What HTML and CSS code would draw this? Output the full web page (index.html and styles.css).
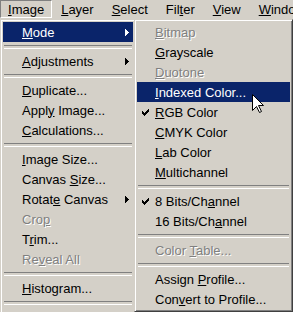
FILE: index.html
```html
<html>

<head>
  <title>Image menu</title>
  <link rel="stylesheet" href="styles.css">
</head>

<body>
  <div class="menubar">
    <span class="bar-item open"><u>I</u>mage</span>
    <span class="bar-item"><u>L</u>ayer</span>
    <span class="bar-item"><u>S</u>elect</span>
    <span class="bar-item">Fil<u>t</u>er</span>
    <span class="bar-item"><u>V</u>iew</span>
    <span class="bar-item"><u>W</u>indow</span>
  </div>

  <div class="menus">
    <ul class="menu main">
      <li class="item active"><span class="mark"></span><span><u>M</u>ode</span><svg class="arrow" width="4" height="7"><rect x="0" y="0" width="1" height="7"/><rect x="1" y="1" width="1" height="5"/><rect x="2" y="2" width="1" height="3"/><rect x="3" y="3" width="1" height="1"/></svg></li>
      <li class="sep"></li>
      <li class="item"><span class="mark"></span><span><u>A</u>djustments</span><svg class="arrow" width="4" height="7"><rect x="0" y="0" width="1" height="7"/><rect x="1" y="1" width="1" height="5"/><rect x="2" y="2" width="1" height="3"/><rect x="3" y="3" width="1" height="1"/></svg></li>
      <li class="sep"></li>
      <li class="item"><span class="mark"></span><span><u>D</u>uplicate...</span></li>
      <li class="item"><span class="mark"></span><span>Appl<u>y</u> Image...</span></li>
      <li class="item"><span class="mark"></span><span><u>C</u>alculations...</span></li>
      <li class="sep"></li>
      <li class="item"><span class="mark"></span><span><u>I</u>mage Size...</span></li>
      <li class="item"><span class="mark"></span><span>Canvas <u>S</u>ize...</span></li>
      <li class="item"><span class="mark"></span><span>Rotat<u>e</u> Canvas</span><svg class="arrow" width="4" height="7"><rect x="0" y="0" width="1" height="7"/><rect x="1" y="1" width="1" height="5"/><rect x="2" y="2" width="1" height="3"/><rect x="3" y="3" width="1" height="1"/></svg></li>
      <li class="item disabled"><span class="mark"></span><span>Cro<u>p</u></span></li>
      <li class="item"><span class="mark"></span><span>T<u>r</u>im...</span></li>
      <li class="item disabled"><span class="mark"></span><span>Re<u>v</u>eal All</span></li>
      <li class="sep"></li>
      <li class="item"><span class="mark"></span><span><u>H</u>istogram...</span></li>
      <li class="sep"></li>
      <li class="item"><span class="mark"></span><span>Trap...</span></li>
    </ul>

    <ul class="menu sub">
      <li class="item disabled"><span class="mark"></span><span><u>B</u>itmap</span></li>
      <li class="item"><span class="mark"></span><span><u>G</u>rayscale</span></li>
      <li class="item disabled"><span class="mark"></span><span><u>D</u>uotone</span></li>
      <li class="item active"><span class="mark"></span><span><u>I</u>ndexed Color...</span></li>
      <li class="item"><span class="mark"><svg class="check" width="7" height="7"><path d="M0 2h1v1h1v1h1v-1h1v-1h1v-1h1v-1h1v3h-1v1h-1v1h-1v1h-1v1h-1v-1h-1v-1h-1z"/></svg></span><span><u>R</u>GB Color</span></li>
      <li class="item"><span class="mark"></span><span><u>C</u>MYK Color</span></li>
      <li class="item"><span class="mark"></span><span><u>L</u>ab Color</span></li>
      <li class="item"><span class="mark"></span><span><u>M</u>ultichannel</span></li>
      <li class="sep"></li>
      <li class="item"><span class="mark"><svg class="check" width="7" height="7"><path d="M0 2h1v1h1v1h1v-1h1v-1h1v-1h1v-1h1v3h-1v1h-1v1h-1v1h-1v1h-1v-1h-1v-1h-1z"/></svg></span><span>8 Bits/Ch<u>a</u>nnel</span></li>
      <li class="item"><span class="mark"></span><span>16 Bits/Ch<u>a</u>nnel</span></li>
      <li class="sep"></li>
      <li class="item disabled"><span class="mark"></span><span>Color <u>T</u>able...</span></li>
      <li class="sep"></li>
      <li class="item"><span class="mark"></span><span>Assign <u>P</u>rofile...</span></li>
      <li class="item"><span class="mark"></span><span>Con<u>v</u>ert to Profile...</span></li>
    </ul>
  </div>

  <svg class="cursor" width="12" height="20" viewBox="0 0 12 20">
    <path d="M0.5 0.5V16.5L4.5 12.5L7.5 18.5L9.5 17.5L6.5 11.5H11.5Z" fill="#fff" stroke="#000" stroke-linejoin="miter"/>
  </svg>
</body>

</html>
```

FILE: styles.css
```css
* {
  box-sizing: border-box;
  margin: 0;
  padding: 0;
}

html, body {
  width: 293px;
  height: 312px;
  overflow: hidden;
  background: #d4d0c8;
}

body {
  position: relative;
  font-family: "Liberation Sans", Arial, sans-serif;
  font-size: 13px;
  color: #000;
}

u {
  text-decoration: underline;
}

/* menu bar */
.menubar {
  display: flex;
  height: 19px;
  white-space: nowrap;
  overflow: hidden;
}

.bar-item {
  flex-shrink: 0;
  height: 18px;
  line-height: 17px;
  padding: 0 8px;
  border: 1px solid transparent;
}

.bar-item:first-child {
  padding: 0 7px;
}

.bar-item.open {
  border-color: #808080 #fff #fff #808080;
}

/* drop-down menus */
.menus {
  display: flex;
  align-items: flex-start;
}

.menu {
  list-style: none;
  border: 1px solid;
  border-color: #d4d0c8 #404040 #404040 #d4d0c8;
  box-shadow: inset 1px 1px #fff, inset -1px -1px #808080;
  padding: 2px;
  background: #d4d0c8;
}

.main {
  width: 136px;
  flex-shrink: 0;
}

.sub {
  width: 159px;
  flex-shrink: 0;
  margin-left: -2px;
}

.item {
  display: flex;
  align-items: center;
  height: 20px;
  white-space: nowrap;
}

.mark {
  display: flex;
  align-items: center;
  width: 18px;
  height: 20px;
  padding-left: 5px;
  flex-shrink: 0;
}

.main .mark {
  width: 19px;
}

.item.active {
  background: #0a246a;
  color: #fff;
}

.item.disabled {
  color: #808080;
  text-shadow: 1px 1px 0 #fff;
}

.arrow {
  margin-left: auto;
  margin-right: 4px;
  fill: currentColor;
}

.check {
  fill: #000;
}

.sep {
  height: 9px;
  padding-top: 3px;
}

.sep::before {
  content: "";
  display: block;
  height: 2px;
  margin: 0 1px;
  border-top: 1px solid #808080;
  border-bottom: 1px solid #fff;
}

.cursor {
  position: absolute;
  left: 252px;
  top: 94px;
}
```
